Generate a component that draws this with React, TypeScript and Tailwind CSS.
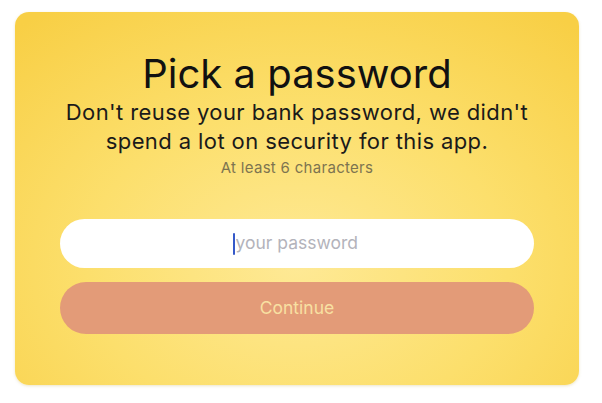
import { useState } from "react";

const PasswordCard = () => {
  const [password, setPassword] = useState("");

  return (
    <div className="ml-[15px] mt-[12px] flex h-[373px] w-[564px] flex-col items-center rounded-[14px] bg-[radial-gradient(ellipse_75%_85%_at_50%_68%,#fee995_0%,#fcdf6c_50%,#f8cf45_100%)] px-[45px] shadow-[0_1px_3px_rgba(180,150,40,0.25)]">
      <h1 className="mt-[40px] text-[40px] leading-[44px] text-[#111]">
        Pick a password
      </h1>
      <p className="mt-[2px] text-center text-[22px] leading-[29px] tracking-[0.4px] text-[#1a1a1a]">
        Don't reuse your bank password, we didn't
        <br />
        spend a lot on security for this app.
      </p>
      <div className="mt-[2px] text-[15px] leading-[20px] tracking-[0.3px] text-[#7d7450]">
        At least 6 characters
      </div>

      <div className="mt-[41px] flex h-[49px] w-full items-center justify-center rounded-full bg-white">
        <span className="mr-[1px] h-[22px] w-[2px] rounded-sm bg-[#3559c9]" />
        <input
          type="password"
          value={password}
          onChange={(e) => setPassword(e.target.value)}
          placeholder="your password"
          className="w-[126px] bg-transparent text-[17.5px] text-[#333] caret-transparent outline-none placeholder:text-[#b3b3bb]"
        />
      </div>
      <button
        disabled={password.length < 6}
        className="mt-[14px] h-[52px] w-full rounded-full bg-[#e39b78] text-[17.5px] text-[#f8e0a2]"
      >
        Continue
      </button>
    </div>
  );
};

export default function App() {
  return (
    <div
      className="h-[403px] w-[602px] overflow-hidden bg-white"
      style={{ fontFamily: "Inter, 'Liberation Sans', sans-serif" }}
    >
      <PasswordCard />
    </div>
  );
}
